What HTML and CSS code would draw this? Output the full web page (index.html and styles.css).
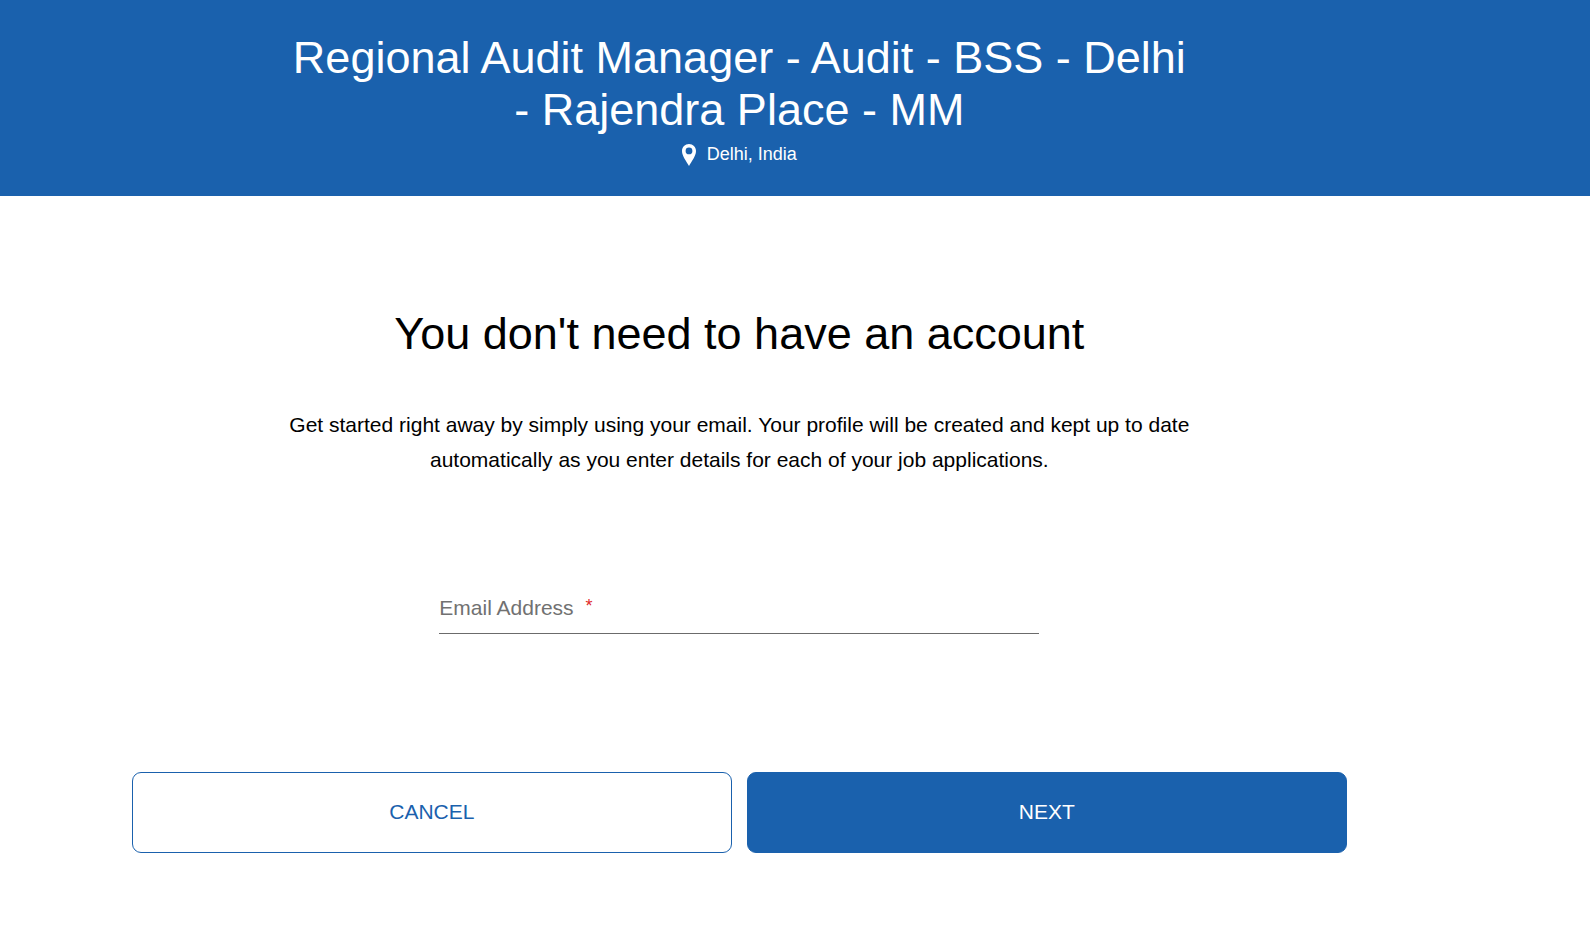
FILE: index.html
```html
<!DOCTYPE html>
<html lang="en">
<head>
<meta charset="utf-8">
<meta name="viewport" content="width=device-width, initial-scale=1">
<title>Regional Audit Manager - Apply</title>
<link rel="stylesheet" href="styles.css">
</head>
<body>
<header class="job-header">
  <h1 class="job-title">Regional Audit Manager - Audit - BSS - Delhi - Rajendra Place - MM</h1>
  <p class="job-location">
    <svg class="pin" viewBox="0 0 14 22" aria-hidden="true"><path fill="currentColor" fill-rule="evenodd" d="M7 0C3.100 0 0 3.100 0 7c0 5 4.500 10.500 7 15 2.500-4.500 7-10 7-15 0-3.900-3.100-7-7-7zm0 3.500a3.400 3.400 0 1 1 0 6.800 3.400 3.400 0 0 1 0-6.800z"/></svg>
    <span>Delhi, India</span>
  </p>
</header>
<main class="apply">
  <h2 class="heading">You don't need to have an account</h2>
  <p class="intro">Get started right away by simply using your email. Your profile will be created and kept up to date automatically as you enter details for each of your job applications.</p>
  <form class="form">
    <div class="field">
      <label class="field-label" for="email">Email Address <span class="required">*</span></label>
      <input class="field-input" id="email" type="email" required>
    </div>
    <div class="actions">
      <button class="button button-outline" type="button">CANCEL</button>
      <button class="button button-solid" type="submit">NEXT</button>
    </div>
  </form>
</main>
</body>
</html>
```
FILE: styles.css
```css
* {
  box-sizing: border-box;
}

body {
  margin: 0;
  background: #fff;
  color: #000;
  font-family: "Liberation Sans", Arial, sans-serif;
}

.job-header,
.apply {
  display: flex;
  flex-direction: column;
  align-items: center;
  padding-right: 7%;
  text-align: center;
}

.job-header {
  padding-top: 32px;
  padding-bottom: 30px;
  background: #1a61ad;
  color: #fff;
}

.job-title {
  max-width: 912px;
  margin: 0;
  font-size: 45px;
  font-weight: 400;
  line-height: 52px;
}

.job-location {
  display: flex;
  gap: 11px;
  margin: 0;
  padding-top: 8px;
  font-size: 18px;
  line-height: 20px;
}

.pin {
  width: 14px;
  height: 22px;
}

.apply {
  padding-top: 112px;
  padding-bottom: 64px;
}

.heading {
  margin: 0;
  font-size: 45px;
  font-weight: 400;
  line-height: 52px;
}

.intro {
  max-width: 912px;
  margin: 0;
  padding-top: 47px;
  font-size: 21px;
  line-height: 35px;
}

.form {
  display: flex;
  flex-direction: column;
  align-items: center;
  width: 100%;
  max-width: 1215px;
  padding-top: 111px;
}

.field {
  display: grid;
  width: 100%;
  max-width: 600px;
}

.field-label,
.field-input {
  grid-area: 1 / 1;
}

.field-label {
  display: flex;
  gap: 12px;
  padding-top: 8px;
  color: #717171;
  font-size: 21px;
  line-height: 24px;
  text-align: left;
  pointer-events: none;
}

.required {
  color: #e02b2b;
  font-size: 18px;
  line-height: 20px;
}

.field-input {
  width: 100%;
  height: 46px;
  padding: 0;
  border: 0;
  border-bottom: 1px solid #6b6b6b;
  border-radius: 0;
  outline: 0;
  background: transparent;
  font: inherit;
  font-size: 21px;
}

.actions {
  display: grid;
  grid-template-columns: 1fr 1fr;
  gap: 15px;
  width: 100%;
  padding-top: 138px;
}

.button {
  padding: 27px 16px 28px;
  border: 1px solid #1a61ad;
  border-radius: 9px;
  font-family: inherit;
  font-size: 21px;
  line-height: 24px;
  cursor: pointer;
}

.button-outline {
  background: #fff;
  color: #1a61ad;
}

.button-solid {
  background: #1a61ad;
  color: #fff;
}
```
